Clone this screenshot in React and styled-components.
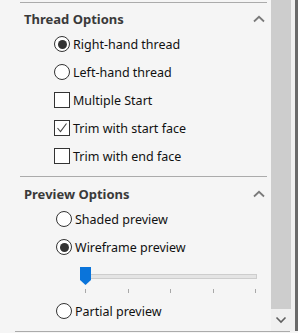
import styled, { createGlobalStyle } from 'styled-components'

const GlobalStyle = createGlobalStyle`
  html, body {
    margin: 0;
    padding: 0;
    background: #f5f5f5;
  }
  body {
    font-family: "Noto Sans", "Open Sans", sans-serif;
  }
`
const Frame = styled.div`
  width: 298px;
  height: 333px;
  overflow: hidden;
  display: flex;
  flex-direction: column;
  background: #f5f5f5;
`
const Body = styled.div`
  display: flex;
  height: 331px;
`
const Panel = styled.div`
  width: 270px;
  padding-top: 2px;
  display: flex;
  flex-direction: column;
`
const Section = styled.div`
  margin: 0 3px 0 20px;
  border-top: 1px solid #ababab;
  padding-top: ${(p) => p.$top}px;
  padding-bottom: ${(p) => p.$bottom}px;
`
const Header = styled.div`
  display: flex;
  align-items: center;
  justify-content: space-between;
  height: 18px;
  padding-left: 4px;
  padding-right: 2px;
  margin-bottom: 2px;
  font-size: 13px;
  font-weight: 700;
  color: #3a3a3a;
`
const List = styled.div`
  display: flex;
  flex-direction: column;
  padding-left: ${(p) => p.$indent}px;
`
const Row = styled.label`
  display: flex;
  align-items: center;
  gap: 3px;
  height: 28px;
  font-size: 12.5px;
  color: #111;
`
const Radio = styled.span`
  box-sizing: border-box;
  width: 16px;
  height: 16px;
  border-radius: 50%;
  border: 1px solid #333;
  background: #fff;
  display: flex;
  align-items: center;
  justify-content: center;
  &::after {
    content: '';
    width: 9px;
    height: 9px;
    border-radius: 50%;
    background: ${(p) => (p.$on ? '#333' : 'transparent')};
  }
`
const Check = styled.span`
  box-sizing: border-box;
  width: 16px;
  height: 16px;
  border: 1px solid #333;
  background: #fff;
  display: flex;
  align-items: center;
  justify-content: center;
`
const SliderBox = styled.div`
  height: 36px;
  padding: 6px 0 0 24px;
  box-sizing: border-box;
  display: flex;
  flex-direction: column;
`
const TrackRow = styled.div`
  position: relative;
  width: 177px;
  height: 18px;
`
const Track = styled.div`
  position: absolute;
  left: 0;
  right: 0;
  top: 7px;
  height: 5px;
  box-sizing: border-box;
  background: #e4e4e4;
  border: 1px solid #cdcdcd;
`
const Thumb = styled.svg`
  position: absolute;
  left: 0;
  top: 0;
`
const Ticks = styled.div`
  display: flex;
  justify-content: space-between;
  width: 171px;
  margin: 4px 0 0 5px;
`
const Tick = styled.span`
  width: 1px;
  height: 4px;
  background: #a8a8a8;
`
const Scrollbar = styled.div`
  width: 20px;
  margin-left: 1px;
  display: flex;
  flex-direction: column;
`
const ScrollThumb = styled.div`
  flex: 1;
  background: #cdcdcd;
`
const ScrollButton = styled.div`
  height: 22px;
  background: #f0f0f0;
  display: flex;
  align-items: center;
  justify-content: center;
`
const Gutter = styled.div`
  width: 4px;
  background: #f0f0f0;
`
const Edge = styled.div`
  width: 3px;
  background: #6a6a6a;
`
const BottomRule = styled.div`
  margin-left: 15px;
  width: 275px;
  height: 1px;
  background: #ababab;
`

const ChevronUp = () => (
  <svg width="12" height="8" viewBox="0 0 12 8">
    <path d="M1 6.5 L6 1.8 L11 6.5" fill="none" stroke="#7a7a7a" strokeWidth="1.8" />
  </svg>
)

const ChevronDown = () => (
  <svg width="12" height="8" viewBox="0 0 12 8">
    <path d="M1.5 1.5 L6 6 L10.5 1.5" fill="none" stroke="#606060" strokeWidth="1.6" />
  </svg>
)

const Tick16 = () => (
  <svg width="14" height="14" viewBox="0 0 14 14">
    <path d="M2.5 7 L5.5 10.5 L11.5 2.5" fill="none" stroke="#444" strokeWidth="1.1" />
  </svg>
)

const Option = ({ type, on, children }) => (
  <Row>
    {type === 'radio' ? (
      <Radio $on={on} />
    ) : (
      <Check>{on && <Tick16 />}</Check>
    )}
    {children}
  </Row>
)

const App = () => (
  <Frame>
    <GlobalStyle />
    <Body>
      <Panel>
        <Section $top={7} $bottom={6}>
          <Header>
            Thread Options
            <ChevronUp />
          </Header>
          <List $indent={34}>
            <Option type="radio" on>Right-hand thread</Option>
            <Option type="radio">Left-hand thread</Option>
            <Option type="check">Multiple Start</Option>
            <Option type="check" on>Trim with start face</Option>
            <Option type="check">Trim with end face</Option>
          </List>
        </Section>
        <Section $top={8} $bottom={0}>
          <Header>
            Preview Options
            <ChevronUp />
          </Header>
          <List $indent={36}>
            <Option type="radio">Shaded preview</Option>
            <Option type="radio" on>Wireframe preview</Option>
            <SliderBox>
              <TrackRow>
                <Track />
                <Thumb width="11" height="18" viewBox="0 0 11 18">
                  <path d="M0 0 H11 V13 L5.5 18 L0 13 Z" fill="#0a74da" />
                </Thumb>
              </TrackRow>
              <Ticks>
                {[0, 1, 2, 3, 4].map((i) => (
                  <Tick key={i} />
                ))}
              </Ticks>
            </SliderBox>
            <Option type="radio">Partial preview</Option>
          </List>
        </Section>
      </Panel>
      <Scrollbar>
        <ScrollThumb />
        <ScrollButton>
          <ChevronDown />
        </ScrollButton>
      </Scrollbar>
      <Gutter />
      <Edge />
    </Body>
    <BottomRule />
  </Frame>
)

export default App
